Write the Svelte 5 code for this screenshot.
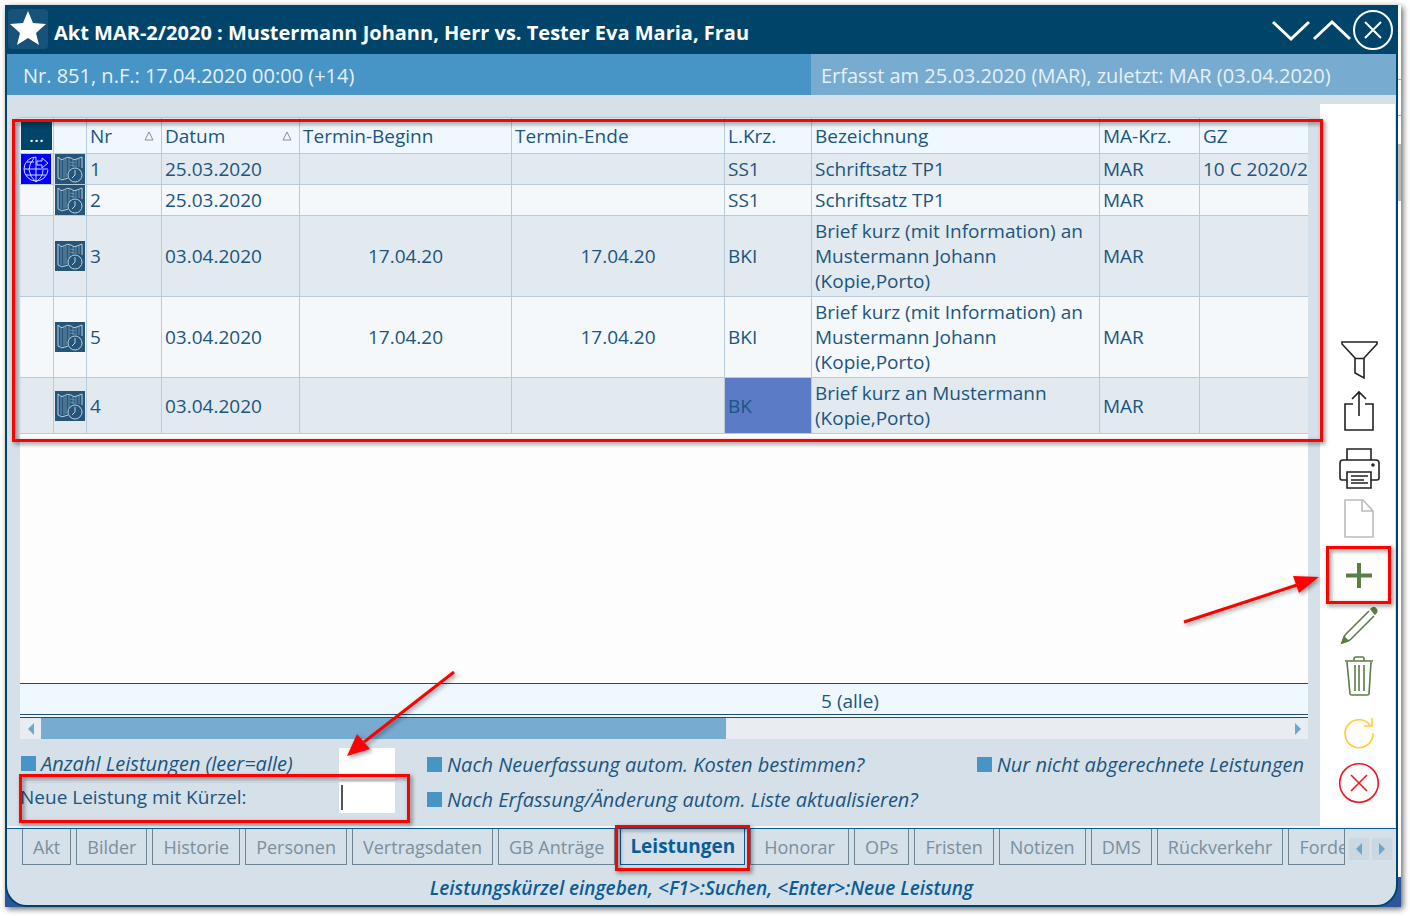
<script>
    const columns = [
        { label: 'Nr', width: 75, sorted: true },
        { label: 'Datum', width: 138, sorted: true },
        { label: 'Termin-Beginn', width: 212 },
        { label: 'Termin-Ende', width: 213 },
        { label: 'L.Krz.', width: 87 },
        { label: 'Bezeichnung', width: 288 },
        { label: 'MA-Krz.', width: 100 },
        { label: 'GZ', width: 180 }
    ];

    const rows = [
        { nr: 1, datum: '25.03.2020', termin: '', krz: 'SS1', text: 'Schriftsatz TP1', gz: '10 C 2020/20', web: true },
        { nr: 2, datum: '25.03.2020', termin: '', krz: 'SS1', text: 'Schriftsatz TP1' },
        { nr: 3, datum: '03.04.2020', termin: '17.04.20', krz: 'BKI', text: 'Brief kurz (mit Information) an Mustermann Johann (Kopie,Porto)' },
        { nr: 5, datum: '03.04.2020', termin: '17.04.20', krz: 'BKI', text: 'Brief kurz (mit Information) an Mustermann Johann (Kopie,Porto)' },
        { nr: 4, datum: '03.04.2020', termin: '', krz: 'BK', text: 'Brief kurz an Mustermann (Kopie,Porto)', selected: true }
    ];

    const tabs = [
        'Akt', 'Bilder', 'Historie', 'Personen', 'Vertragsdaten', 'GB Anträge', 'Leistungen',
        'Honorar', 'OPs', 'Fristen', 'Notizen', 'DMS', 'Rückverkehr', 'Forderungen'
    ];

    let active = $state('Leistungen');
</script>

{#snippet mapIcon()}
    <svg class="cell-icon map" viewBox="0 0 30 30" aria-hidden="true">
        <path d="M3 3Q6 7 9 5Q12 2 16 4Q19 7 22 5L27 3V14M3 3V24Q7 27 10 25L13 24" />
        <path class="fine" d="M6 6V24M9 6V24M11 5V23M14 4V17M18 6V13M21 6V13M24 5V13M15 8L20 9M15 11L20 12" />
        <circle cx="20" cy="21" r="7" />
        <path d="M20 16V21L17 24" />
    </svg>
{/snippet}

<div class="desktop">
    <div class="window">
        <header>
            <svg class="star" viewBox="0 0 40 40" aria-hidden="true">
                <rect width="40" height="40" rx="4" />
                <path d="M20 2L25 14L38 15L28 24L31 36L20 29L9 36L12 24L2 15L15 14Z" />
            </svg>
            <h1>Akt MAR-2/2020 : Mustermann Johann, Herr vs. Tester Eva Maria, Frau</h1>
            <div class="window-buttons">
                <button aria-label="Nächster Akt"><svg viewBox="0 0 41 40"><path d="M3 12L21 29L39 12" /></svg></button>
                <button aria-label="Voriger Akt"><svg viewBox="0 0 41 40"><path d="M3 29L21 12L39 29" /></svg></button>
                <button aria-label="Schließen"><svg viewBox="0 0 41 40"><circle cx="21" cy="20" r="19" /><path d="M13 12L29 28M29 12L13 28" /></svg></button>
            </div>
        </header>

        <div class="info">
            <p>Nr. 851, n.F.: 17.04.2020 00:00 (+14)</p>
            <p class="recorded">Erfasst am 25.03.2020 (MAR), zuletzt: MAR (03.04.2020)</p>
        </div>

        <main>
            <section class="content">
                <div class="list">
                    <div class="clip">
                        <table>
                            <colgroup>
                                <col style="width: 34px" />
                                <col style="width: 33px" />
                                {#each columns as col}
                                    <col style="width: {col.width}px" />
                                {/each}
                            </colgroup>
                            <thead>
                                <tr>
                                    <th class="icon"><button class="more" aria-label="Spalten">...</button></th>
                                    <th></th>
                                    {#each columns as col}
                                        <th>
                                            <span class="head">
                                                {col.label}
                                                {#if col.sorted}
                                                    <svg class="sort" viewBox="0 0 10 10" aria-hidden="true"><path d="M5 1L9 9H1Z" /></svg>
                                                {/if}
                                            </span>
                                        </th>
                                    {/each}
                                </tr>
                            </thead>
                            <tbody>
                                {#each rows as row}
                                    <tr>
                                        <td class="icon">
                                            {#if row.web}
                                                <svg class="cell-icon globe" viewBox="0 0 30 30" aria-hidden="true">
                                                    <path d="M15 3A12 12 0 1 0 27 16M3 15H27M6 8H13M5 21H25M15 3V28M13 4Q8 10 8 16Q9 23 15 28Q22 23 22 16" />
                                                    <path class="out" d="M16 7H21V4L27 9L21 14V11H16Z" />
                                                </svg>
                                            {/if}
                                        </td>
                                        <td class="icon">{@render mapIcon()}</td>
                                        <td>{row.nr}</td>
                                        <td>{row.datum}</td>
                                        <td class="center">{row.termin}</td>
                                        <td class="center">{row.termin}</td>
                                        <td class:selected={row.selected}>{row.krz}</td>
                                        <td>{row.text}</td>
                                        <td>MAR</td>
                                        <td class="nowrap">{row.gz ?? ''}</td>
                                    </tr>
                                {/each}
                            </tbody>
                        </table>
                    </div>
                    <div class="frame list-frame"></div>
                </div>
                <div class="empty"></div>
                <div class="summary">5 (alle)</div>
                <div class="scrollbar">
                    <button aria-label="Nach links"><svg viewBox="0 0 8 12"><path d="M7 0V12L1 6Z" /></svg></button>
                    <div class="track"><div class="thumb"></div></div>
                    <button aria-label="Nach rechts"><svg viewBox="0 0 8 12"><path d="M1 0V12L7 6Z" /></svg></button>
                </div>

                <form>
                    <div class="fields">
                        <div class="field">
                            <input type="checkbox" id="limit" />
                            <label class="option" for="limit">Anzahl Leistungen (leer=alle)</label>
                            <input type="text" aria-label="Anzahl" />
                        </div>
                        <div class="field">
                            <label for="code">Neue Leistung mit Kürzel:</label>
                            <span class="caret-box"><input type="text" id="code" /></span>
                            <div class="frame field-frame"></div>
                        </div>
                    </div>
                    <div class="options">
                        <label class="option"><input type="checkbox" />Nach Neuerfassung autom. Kosten bestimmen?</label>
                        <label class="option"><input type="checkbox" />Nach Erfassung/Änderung autom. Liste aktualisieren?</label>
                    </div>
                    <div class="options">
                        <label class="option"><input type="checkbox" />Nur nicht abgerechnete Leistungen</label>
                    </div>
                    <svg class="arrow field-arrow" viewBox="0 0 120 100" aria-hidden="true">
                        <path class="line" d="M112 8L22 78" />
                        <path class="tip" d="M5 92L15 70L28 85Z" />
                    </svg>
                </form>
            </section>

            <aside>
                <div class="group">
                    <button aria-label="Filter">
                        <svg viewBox="0 0 44 50"><path d="M5 5H40V7L27 21V41L18 36V21L5 7ZM18 21.5H27" /></svg>
                    </button>
                    <button aria-label="Export">
                        <svg viewBox="0 0 44 50"><path d="M16 17H8V43H36V17H28M22 29V5M15 12L22 5L29 12" /></svg>
                    </button>
                </div>
                <div class="group">
                    <button aria-label="Drucken">
                        <svg viewBox="0 0 44 50">
                            <path d="M10 16V5H34V16M10 36H5Q3 36 3 34V19Q3 16 6 16H39Q42 16 42 19V34Q42 36 40 36H34M10 28H34V44H10ZM14 32H31M14 36H27M14 39H31" />
                            <circle cx="36" cy="21" r="1" />
                        </svg>
                    </button>
                    <button class="disabled" aria-label="Dokument">
                        <svg viewBox="0 0 44 50"><path d="M8 6H26L36 17V43H8ZM25 6V17H36" /></svg>
                    </button>
                </div>
                <div class="group green">
                    <button class="add" aria-label="Neu">
                        <svg viewBox="0 0 44 50"><path class="thick" d="M22 12V37M9 24.5H35" /></svg>
                        <span class="frame add-frame"></span>
                        <svg class="arrow add-arrow" viewBox="0 0 145 60" aria-hidden="true">
                            <path class="line" d="M5 51L118 14" />
                            <path class="tip" d="M140 6L114 5L120 22Z" />
                        </svg>
                    </button>
                    <button aria-label="Bearbeiten">
                        <svg viewBox="0 0 44 50">
                            <path d="M8 34L32 10M13 39L37 15M8 34L5 42L13 39" />
                            <path class="solid" d="M7 36L5 42L11 40ZM34 8Q37 5 39 8Q41 10 38 13Z" />
                        </svg>
                    </button>
                    <button aria-label="Löschen">
                        <svg viewBox="0 0 44 50"><path d="M8 10H36M17 10V8Q17 6 19 6H26Q27 6 27 8V10M10 11L13 43Q13 44 15 44H30Q32 44 32 43L34 11M18 14V40M22 14V40M27 14V40" /></svg>
                    </button>
                </div>
                <div class="group">
                    <button class="yellow" aria-label="Aktualisieren">
                        <svg viewBox="0 0 44 50"><path d="M36 25A14 14 0 1 1 33 17M35 10V18H27" /></svg>
                    </button>
                    <button class="red" aria-label="Abbrechen">
                        <svg viewBox="0 0 44 50"><circle cx="22" cy="25" r="19.3" /><path d="M14 17L30 33M30 17L14 33" /></svg>
                    </button>
                </div>
            </aside>
        </main>

        <nav>
            <div class="tabs">
                {#each tabs as tab}
                    <button class="tab" class:active={tab === active} onclick={() => (active = tab)}>
                        {tab}
                        {#if tab === active}<span class="frame tab-frame"></span>{/if}
                    </button>
                {/each}
            </div>
            <button class="step" aria-label="Tabs zurück"><svg viewBox="0 0 8 12"><path d="M7 0V12L1 6Z" /></svg></button>
            <button class="step" aria-label="Tabs weiter"><svg viewBox="0 0 8 12"><path d="M1 0V12L7 6Z" /></svg></button>
        </nav>

        <footer>Leistungskürzel eingeben, &lt;F1&gt;:Suchen, &lt;Enter&gt;:Neue Leistung</footer>
    </div>
</div>

<style>
    :global(body) {
        background: #fff;
    }

    .desktop {
        box-sizing: border-box;
        display: flex;
        min-height: calc(100vh - 14px);
        margin: 5px 9px 9px 5px;
        padding-right: 3px;
        background:
            linear-gradient(#2b579a, #2b579a) bottom / 100% 30px no-repeat,
            linear-gradient(#bbb, #bbb) right 139px / 3px 57px no-repeat,
            linear-gradient(#aaa, #aaa) right 110px / 3px 1px no-repeat,
            linear-gradient(#aaa, #aaa) right 74px / 3px 1px no-repeat,
            #fff;
        box-shadow: 2px 2px 6px rgba(0, 0, 0, 0.6);
        font-family: 'Open Sans', 'Noto Sans', sans-serif;
        font-size: 19px;
        line-height: 25px;
        color: #1b5580;
    }

    .window {
        flex: 1;
        display: flex;
        flex-direction: column;
        min-width: 0;
        border: 2px solid #00446a;
        border-radius: 0 0 22px 22px;
        background: #d5e0e9;
    }

    button {
        display: flex;
        align-items: center;
        justify-content: center;
        padding: 0;
        border: 0;
        background: none;
        font: inherit;
        color: inherit;
    }

    svg {
        fill: none;
        stroke: currentColor;
    }

    header {
        display: flex;
        align-items: center;
        height: 47px;
        background: #00446a;
        color: #fff;
    }

    .star {
        width: 40px;
        height: 40px;
        margin: 0 0 3px 1px;
        stroke: none;

        rect {
            fill: #165279;
        }

        path {
            fill: #fff;
        }
    }

    h1 {
        flex: 1;
        margin: 4px 0 0 6px;
        font-size: 20px;
        font-weight: 700;
        line-height: 25px;
        white-space: nowrap;
    }

    .window-buttons {
        display: flex;
        margin: 0 3px 2px 0;

        svg {
            width: 41px;
            height: 40px;
            stroke-width: 3;
        }

        circle,
        circle + path {
            stroke-width: 2;
        }
    }

    .info {
        display: flex;
        background: #4695c6;
        color: #e6f0f8;
        font-size: 20px;

        p {
            flex: 803;
            margin: 0;
            padding: 9px 0 7px 16px;
            white-space: nowrap;
        }

        .recorded {
            flex: 586;
            padding-left: 10px;
            background: #78abd0;
        }
    }

    main {
        flex: 1;
        display: flex;
    }

    .content {
        flex: 1;
        display: flex;
        flex-direction: column;
        min-width: 0;
        padding: 22px 12px 0 13px;
    }

    .list {
        position: relative;
    }

    .clip {
        overflow: hidden;
    }

    table {
        width: 1360px;
        table-layout: fixed;
        border-collapse: separate;
        border-spacing: 0;
        border-top: 1px solid #b7cbdb;
    }

    th,
    td {
        padding: 3px 3px 2px;
        border-right: 1px solid #b7cbdb;
        border-bottom: 1px solid #b7cbdb;
        font-weight: 400;
        text-align: left;
    }

    th {
        height: 30px;
        background: #f0f8ff;
    }

    td {
        background: #f4f8fb;
    }

    tbody tr:nth-child(odd) td {
        background: #e2e9ef;
    }

    .icon {
        padding: 0 1px;
    }

    td.center {
        text-align: center;
    }

    td.nowrap {
        white-space: nowrap;
    }

    tbody td.selected,
    tbody tr:nth-child(odd) td.selected {
        background: #5b7bc6;
    }

    .head {
        display: flex;
        align-items: center;
        justify-content: space-between;
    }

    .sort {
        width: 10px;
        height: 10px;
        margin-right: 4px;
        color: #8a8f94;
    }

    .more {
        width: 31px;
        height: 28px;
        background: #00446a;
        color: #fff;
    }

    .cell-icon {
        display: block;
        width: 30px;
        height: 30px;
    }

    .map {
        background: #25567a;
        color: #bfd0dc;

        circle {
            fill: #25567a;
        }

        .fine {
            stroke: #6d91aa;
        }
    }

    .globe {
        background: #00f;
        color: #cfdcff;

        .out {
            fill: #00f;
        }
    }

    .empty {
        flex: 1;
        background: #fdfdfe;
    }

    .summary {
        padding: 5px 0 0;
        padding-left: 372px;
        border-top: 1px solid #1b5074;
        border-bottom: 4px double #1b5074;
        background: #f0f8ff;
        text-align: center;
    }

    .scrollbar {
        display: flex;
        height: 21px;
        background: #e9edf2;

        button {
            width: 21px;
        }

        svg {
            width: 8px;
            height: 12px;
        }
    }

    .scrollbar path,
    .step path {
        fill: #6da6cf;
        stroke: none;
    }

    .track {
        flex: 1;
    }

    .thumb {
        width: 55%;
        height: 100%;
        background: #78abd0;
    }

    form {
        position: relative;
        display: flex;
        padding: 7px 4px 14px 0;
    }

    .fields {
        width: 375px;
        margin-right: 32px;
    }

    .field {
        position: relative;
        display: flex;
        align-items: center;
        height: 34px;

        label {
            flex: 1;
        }
    }

    input[type='checkbox'] {
        appearance: none;
        width: 15px;
        height: 15px;
        margin: 0 5px 0 0;
        background: #4695c6;
    }

    input[type='checkbox']:checked {
        background: #00446a;
    }

    .field input[type='checkbox'] {
        margin-left: 1px;
    }

    input[type='text'] {
        box-sizing: border-box;
        display: block;
        width: 56px;
        height: 31px;
        padding: 0 3px;
        border: 0;
        background: #fff;
        font: inherit;
        color: inherit;
    }

    .caret-box {
        position: relative;
    }

    .caret-box::before {
        content: '';
        position: absolute;
        top: 3px;
        left: 2px;
        width: 2px;
        height: 25px;
        background: #555;
    }

    .option {
        font-size: 20px;
        font-style: italic;
        white-space: nowrap;
    }

    .options {
        display: flex;
        flex-direction: column;
        gap: 10px;
        padding-top: 6px;

        label {
            display: flex;
            align-items: center;
        }
    }

    .options:nth-child(2) {
        flex: 1;
    }

    aside {
        display: flex;
        flex-direction: column;
        justify-content: flex-end;
        gap: 7px;
        margin: 9px 1px 1px 0;
        padding: 0 14px 19px 17px;
        background: #fff;
        color: #222;

        svg {
            width: 44px;
            height: 50px;
            stroke-width: 1.6;
        }

        .thick {
            stroke-width: 4;
        }

        .solid {
            fill: currentColor;
        }
    }

    .disabled {
        color: #bbb;
    }

    .green {
        color: #5b7d46;
    }

    .yellow {
        color: #fc3;
    }

    .red {
        color: #f0141e;
    }

    .add {
        position: relative;
    }

    .frame {
        position: absolute;
        border: 3px solid #f00;
        filter: drop-shadow(2px 2px 2px rgba(0, 0, 0, 0.5));
        pointer-events: none;
    }

    .list-frame {
        inset: 2px -15px -8px -8px;
    }

    .field-frame {
        inset: -6px -15px -9px -1px;
    }

    .add-frame {
        inset: -5px -10px -3px -11px;
    }

    .tab-frame {
        inset: -4px -6px -7px -6px;
    }

    .arrow {
        position: absolute;
        filter: drop-shadow(2px 2px 2px rgba(0, 0, 0, 0.4));
        pointer-events: none;

        .line {
            stroke: #f00;
            stroke-width: 3;
        }

        .tip {
            fill: #f00;
            stroke: none;
        }
    }

    .field-arrow {
        top: -75px;
        left: 322px;
        width: 120px;
        height: 100px;
    }

    aside .add-arrow {
        top: 20px;
        right: 57px;
        width: 145px;
        height: 60px;
    }

    nav {
        display: flex;
        align-items: flex-start;
        gap: 3px;
        padding: 0 4px 0 15px;
        border-top: 1px solid #0b5c94;
        box-shadow: 0 -2px 0 #f2f6f9;
    }

    .tabs {
        flex: 1;
        display: flex;
        gap: 5px;
        min-width: 0;
        overflow-x: clip;
        margin-right: 1px;
        border-right: 1px solid #6f8493;
    }

    .tab {
        position: relative;
        flex: none;
        height: 36px;
        padding: 1px 10px 0;
        border: solid #6f8493;
        border-width: 0 1px 1px;
        font-size: 18px;
        color: #7b8f9d;
    }

    .active {
        z-index: 1;
        padding: 0 9px;
        border-color: #0b5c94;
        font-size: 19px;
        font-weight: 700;
        color: #0b5c94;
    }

    .active + .tab {
        padding: 1px 13px 0;
    }

    .step {
        width: 20px;
        height: 22px;
        margin-top: 9px;
        background: #cbd8e2;

        svg {
            width: 8px;
            height: 12px;
        }
    }

    footer {
        padding: 11px 0 4px;
        font-style: italic;
        font-weight: 600;
        text-align: center;
        color: #0b5c94;
    }
</style>
